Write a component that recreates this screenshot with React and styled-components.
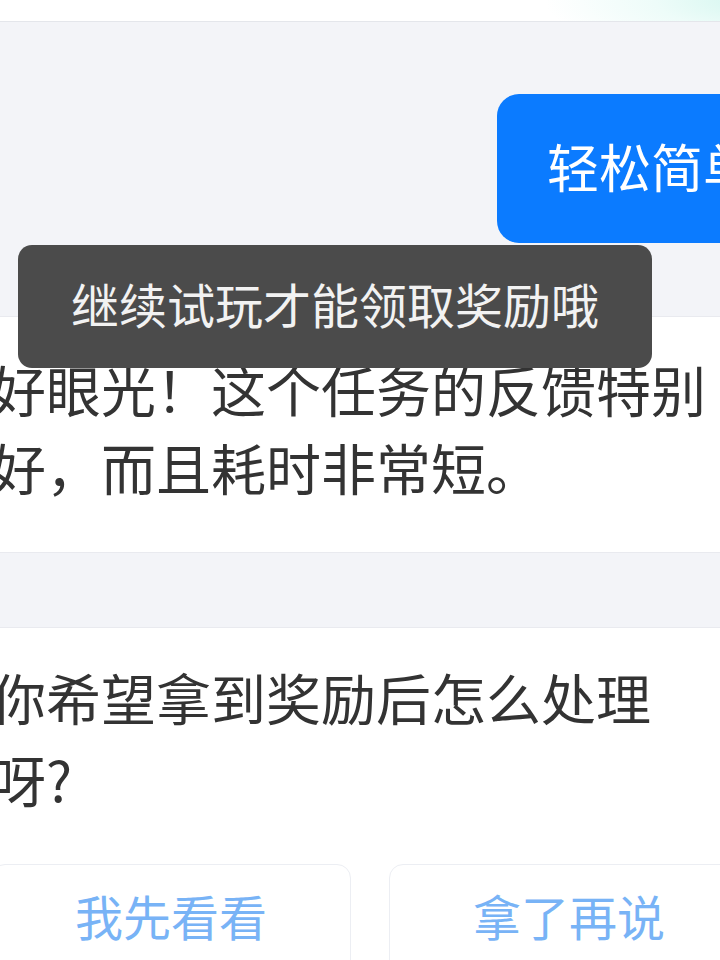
import styled, { createGlobalStyle } from 'styled-components';

const GlobalStyle = createGlobalStyle`
  html, body {
    margin: 0;
    padding: 0;
    background: #f3f4f8;
  }

  body {
    font-family: "Noto Sans CJK SC", "Noto Sans", sans-serif;
    color: #333;
  }
`;

const Viewport = styled.div`
  position: relative;
  width: 720px;
  height: 960px;
  overflow: hidden;
  background: #f3f4f8;
`;

const Page = styled.div`
  width: 790px;
  margin-left: -25px;
  display: flex;
  flex-direction: column;
`;

const Header = styled.div`
  height: 21px;
  background:
    radial-gradient(ellipse 220px 60px at 100% 0%, #d2f6ee 0%, rgba(226, 250, 245, 0.6) 50%, rgba(255, 255, 255, 0) 100%),
    #ffffff;
  border-bottom: 1px solid #e4e6eb;
`;

const BubbleRow = styled.div`
  display: flex;
  justify-content: flex-end;
  padding: 72px 16px 73px;
`;

const Bubble = styled.div`
  margin-right: -56px;
  padding: 0 50px 6px;
  height: 149px;
  box-sizing: border-box;
  display: flex;
  align-items: center;
  border-radius: 22px;
  background: #0b7bff;
  color: #ffffff;
  font-size: 52px;
  white-space: nowrap;
`;

const Card = styled.div`
  background: #ffffff;
  border-top: 1px solid #e9eaef;
  border-bottom: 1px solid #e9eaef;
  padding: ${({ $pad }) => $pad};
  margin-bottom: ${({ $gap }) => $gap || 0}px;
`;

const Message = styled.p`
  margin: 0;
  max-width: ${({ $width }) => $width}px;
  font-size: 55px;
  line-height: ${({ $line }) => $line}px;
  color: #333333;
`;

const Choices = styled.div`
  display: grid;
  grid-template-columns: 1fr 1fr;
  gap: 38px;
  margin-top: 45px;
`;

const Choice = styled.button`
  height: 110px;
  box-sizing: border-box;
  border: 1px solid #eceef3;
  border-radius: 14px;
  background: #ffffff;
  color: #78b3f6;
  font-family: "Noto Sans CJK SC", "Noto Sans", sans-serif;
  font-size: 48px;
  padding: 0 0 8px;
  display: flex;
  align-items: center;
  justify-content: center;
  line-height: 1;
`;

const Toast = styled.div`
  position: absolute;
  left: 18px;
  top: 245px;
  width: 634px;
  height: 123px;
  box-sizing: border-box;
  padding-bottom: 8px;
  border-radius: 14px;
  background: #4b4b4b;
  color: #f2f2f2;
  font-size: 48px;
  display: flex;
  align-items: center;
  justify-content: center;
`;

export default function App() {
  return (
    <Viewport>
      <GlobalStyle />
      <Page>
        <Header />
        <BubbleRow>
          <Bubble>轻松简单</Bubble>
        </BubbleRow>
        <Card $pad="32px 16px 47px" $gap={74}>
          <Message $width={730} $line={78}>
            好眼光！这个任务的反馈特别好，而且耗时非常短。
          </Message>
        </Card>
        <Card $pad="27px 16px 40px">
          <Message $width={690} $line={82}>
            你希望拿到奖励后怎么处理呀?
          </Message>
          <Choices>
            <Choice>我先看看</Choice>
            <Choice>拿了再说</Choice>
          </Choices>
        </Card>
      </Page>
      <Toast>继续试玩才能领取奖励哦</Toast>
    </Viewport>
  );
}
